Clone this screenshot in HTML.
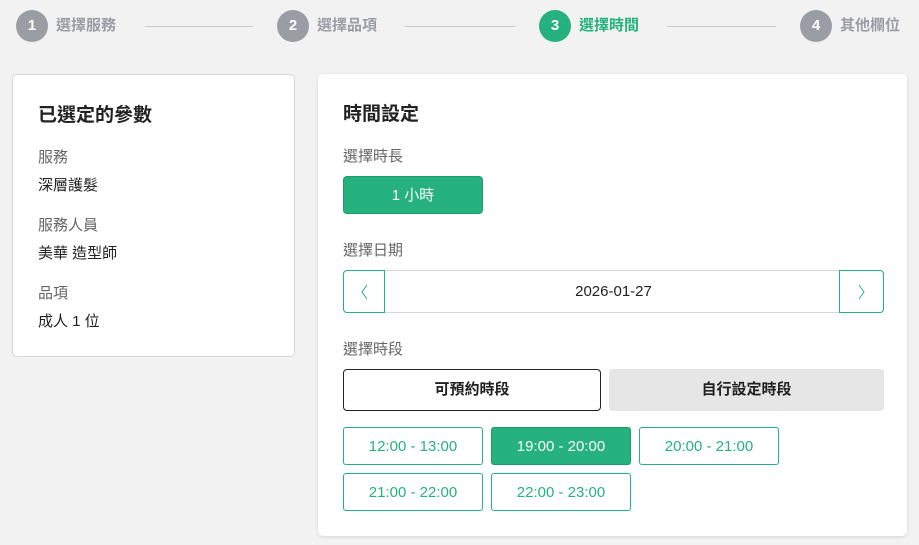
<!DOCTYPE html><html><head><meta charset="utf-8"><style>
*{box-sizing:border-box;margin:0;padding:0}
body{width:919px;height:545px;background:#f2f2f2;font-family:"Liberation Sans","Noto Sans CJK TC",sans-serif;position:relative;overflow:hidden;color:#222}
.a{position:absolute}
.c{position:absolute;top:10px;width:32px;height:32px;border-radius:50%;background:#9a9da3;color:#fff;font-weight:bold;font-size:15px;text-align:center;line-height:32px}
.st{position:absolute;top:16px;font-size:15px;font-weight:bold;color:#9a9da3;line-height:20px}
.ln{position:absolute;top:26px;height:1px;background:#ccc}
.lab{position:absolute;font-size:15px;color:#666;line-height:20px}
.val{position:absolute;font-size:15px;color:#222;line-height:20px}
.slot{position:absolute;width:140px;height:38px;border:1px solid #25b27e;border-radius:3px;color:#25b27e;font-size:15px;text-align:center;line-height:37px;background:#fff}
</style></head><body>
<div class="c" style="left:16px">1</div><div class="st" style="left:56px">選擇服務</div><div class="ln" style="left:145px;width:108px"></div>
<div class="c" style="left:277px">2</div><div class="st" style="left:317px">選擇品項</div><div class="ln" style="left:405px;width:110px"></div>
<div class="c" style="left:539px;background:#25b27e">3</div><div class="st" style="left:579px;color:#25b27e">選擇時間</div><div class="ln" style="left:667px;width:109px"></div>
<div class="c" style="left:800px">4</div><div class="st" style="left:840px">其他欄位</div>

<div class="a" style="left:12px;top:74px;width:283px;height:283px;background:#fff;border:1px solid #d6d6d6;border-radius:5px"></div>
<div class="a" style="left:38px;top:104px;font-size:19px;font-weight:bold;line-height:24px">已選定的參數</div>
<div class="lab" style="left:38px;top:148px">服務</div><div class="val" style="left:38px;top:176px">深層護髮</div>
<div class="lab" style="left:38px;top:216px">服務人員</div><div class="val" style="left:38px;top:244px">美華 造型師</div>
<div class="lab" style="left:38px;top:284px">品項</div><div class="val" style="left:38px;top:312px">成人 1 位</div>

<div class="a" style="left:318px;top:74px;width:589px;height:462px;background:#fff;border-radius:5px;box-shadow:0 1px 3px rgba(0,0,0,.12)"></div>
<div class="a" style="left:343px;top:103px;font-size:19px;font-weight:bold;line-height:24px">時間設定</div>
<div class="lab" style="left:343px;top:147px">選擇時長</div>
<div class="a" style="left:343px;top:176px;width:140px;height:38px;background:#25b27e;border:1px solid #1f9a6b;border-radius:4px;color:#fff;font-size:15px;text-align:center;line-height:37px">1 小時</div>
<div class="lab" style="left:343px;top:241px">選擇日期</div>
<div class="a" style="left:343px;top:270px;width:541px;height:43px;border:1px solid #d6d6d6;border-radius:4px;text-align:center;line-height:42px;font-size:15px">2026-01-27</div>
<div class="a" style="left:343px;top:270px;width:42px;height:43px;border:1px solid #25b27e;border-radius:4px 0 0 4px;background:#fff"><svg width="40" height="41"><path d="M23 14l-5 7 5 7" fill="none" stroke="#25b27e" stroke-width="1"/></svg></div>
<div class="a" style="left:839px;top:270px;width:45px;height:43px;border:1px solid #25b27e;border-radius:0 4px 4px 0;background:#fff"><svg width="43" height="41"><path d="M19 14l5 7-5 7" fill="none" stroke="#25b27e" stroke-width="1"/></svg></div>
<div class="lab" style="left:343px;top:340px">選擇時段</div>
<div class="a" style="left:343px;top:369px;width:258px;height:42px;border:1px solid #222;border-radius:4px;text-align:center;line-height:40px;font-size:15px;font-weight:bold">可預約時段</div>
<div class="a" style="left:609px;top:369px;width:275px;height:42px;background:#e6e6e6;border-radius:4px;text-align:center;line-height:42px;font-size:15px;font-weight:bold">自行設定時段</div>
<div class="slot" style="left:343px;top:427px">12:00 - 13:00</div>
<div class="slot" style="left:491px;top:427px;background:#25b27e;color:#fff;border-color:#1f9a6b">19:00 - 20:00</div>
<div class="slot" style="left:639px;top:427px">20:00 - 21:00</div>
<div class="slot" style="left:343px;top:473px">21:00 - 22:00</div>
<div class="slot" style="left:491px;top:473px">22:00 - 23:00</div>
</body></html>
